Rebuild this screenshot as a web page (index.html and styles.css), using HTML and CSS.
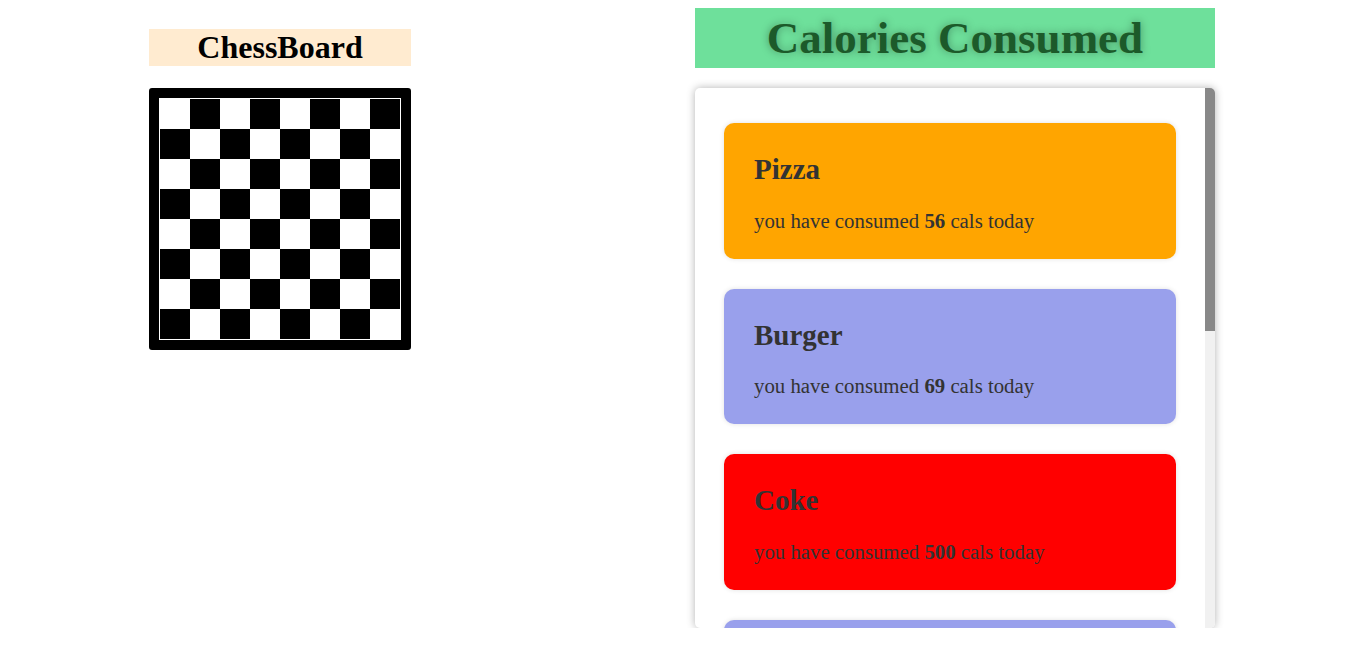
FILE: index.html
```html
<!DOCTYPE html>
<html lang="en">
<head>
    <meta charset="UTF-8">
    <meta name="viewport" content="width=device-width, initial-scale=1.0">
    <title>ChessBoard and Calories</title>
    <link rel="stylesheet" href="styles.css">
</head>
<body>

    <div class="page">
        <div class="chess">
            <h2 class="chess-title">ChessBoard</h2>
            <div class="board" id="board"></div>
        </div>

        <div class="calories">
            <h1 class="calories-title">Calories Consumed</h1>
            <div class="panel">
                <div class="list">
                    <div class="item orange">
                        <h2>Pizza</h2>
                        <p>you have consumed <b>56</b> cals today</p>
                    </div>
                    <div class="item lavender">
                        <h2>Burger</h2>
                        <p>you have consumed <b>69</b> cals today</p>
                    </div>
                    <div class="item red">
                        <h2>Coke</h2>
                        <p>you have consumed <b>500</b> cals today</p>
                    </div>
                    <div class="item lavender">
                        <h2>Browne</h2>
                        <p>you have consumed <b>180</b> cals today</p>
                    </div>
                    <div class="item orange">
                        <h2>Fried Rice</h2>
                        <p>you have consumed <b>90</b> cals today</p>
                    </div>
                    <div class="item lavender">
                        <h2>Lassi</h2>
                        <p>you have consumed <b>200</b> cals today</p>
                    </div>
                    <div class="item red">
                        <h2>Donut</h2>
                        <p>you have consumed <b>300</b> cals today</p>
                    </div>
                </div>
                <div class="scrollbar">
                    <div class="thumb"></div>
                </div>
            </div>
        </div>
    </div>

    <script>
        const board = document.getElementById("board");

        for (let row = 0; row < 8; row++) {
            for (let col = 0; col < 8; col++) {
                const cell = document.createElement("div");
                cell.className = (row + col) % 2 === 0 ? "cell white" : "cell black";
                board.appendChild(cell);
            }
        }
    </script>

</body>
</html>
```

FILE: styles.css
```css
body {
    font-family: "Liberation Serif", "Times New Roman", serif;
    margin: 8px;
    background-color: #fff;
}
.page {
    display: flex;
    align-items: flex-start;
    padding-left: 141px;
    gap: 284px;
}
.chess {
    width: 262px;
}
.chess-title {
    margin: 21px 0 22px;
    height: 37px;
    line-height: 37px;
    font-size: 32px;
    text-align: center;
    background-color: #ffebd0;
}
.board {
    display: grid;
    grid-template-columns: repeat(8, 30px);
    border: 10px solid #000;
    outline: 1px solid #fff;
    outline-offset: -11px;
    border-radius: 3px;
    width: 240px;
    padding: 1px;
    background: #fff;
}
.cell {
    height: 30px;
}
.cell.white {
    background-color: #fff;
}
.cell.black {
    background-color: #000;
}
.calories {
    width: 520px;
}
.calories-title {
    margin: 0 0 20px;
    height: 60px;
    line-height: 60px;
    font-size: 45px;
    text-align: center;
    color: #1c5a2a;
    background-color: #6ee09b;
    text-shadow: 0 0 8px rgba(0, 0, 0, 0.35);
}
.panel {
    display: flex;
    height: 540px;
    overflow: hidden;
    border-radius: 5px;
    box-shadow: 0 0 8px rgba(0, 0, 0, 0.3);
}
.list {
    flex: 1;
    overflow: hidden;
    padding: 35px 29px;
}
.scrollbar {
    width: 10px;
    background: #f1f1f1;
}
.thumb {
    height: 243px;
    background: #888;
}
.item {
    padding: 30px 30px 26px;
    margin-bottom: 30px;
    border-radius: 10px;
    color: #333;
    box-shadow: 0 0 5px rgba(0, 0, 0, 0.12);
}
.item h2 {
    margin: 0 0 22.5px;
    font-size: 29px;
}
.item p {
    margin: 0;
    font-size: 20.8px;
}
.orange {
    background-color: #ffa500;
}
.lavender {
    background-color: #99a0ec;
}
.red {
    background-color: #ff0000;
}
```
